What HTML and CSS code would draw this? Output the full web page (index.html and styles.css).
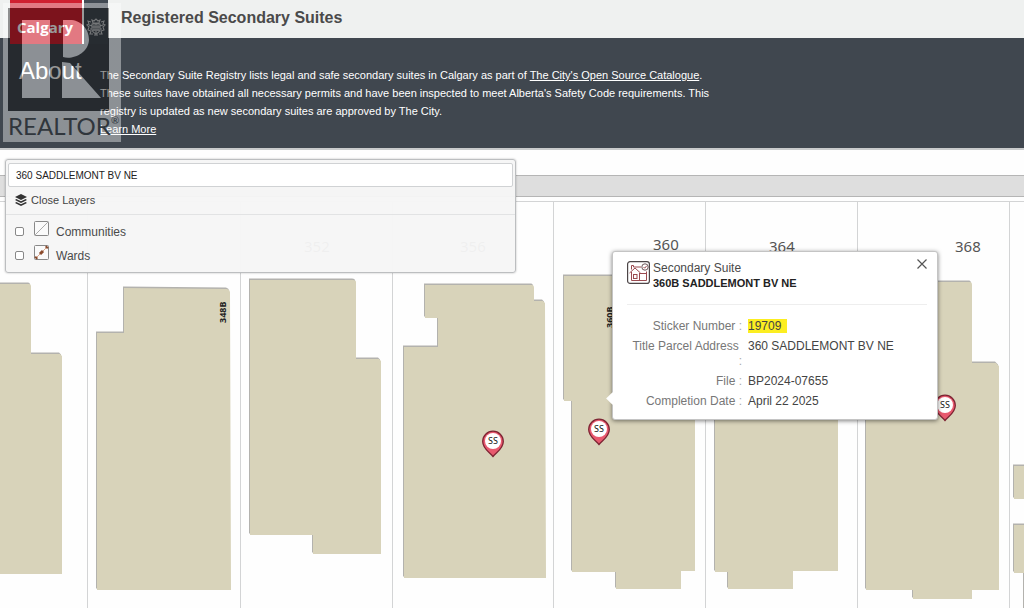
FILE: index.html
```html
<!DOCTYPE html>
<html lang="en">
<head>
<meta charset="utf-8">
<title>Registered Secondary Suites</title>
<link rel="stylesheet" href="styles.css">
</head>
<body>
<header class="topbar">
  <a class="logo" href="#" aria-label="Calgary home">
    <span class="logo-name">Calgary</span>
    <span class="logo-crest">
      <svg width="20" height="20" viewBox="0 0 20 20" fill="none" stroke="#c3c6c9" stroke-width="1.1">
        <path d="M6 3l2 1 2-2 2 2 2-1-1 3H7zM6 7h8v5c0 3-2 4-4 5-2-1-4-2-4-5zM6 10h8M10 7v9M5 5L2 4l1 3-2 1 2 2-1 3 3 1-1 3h3M15 5l3-1-1 3 2 1-2 2 1 3-3 1 1 3h-3M8 18h4M3 8l3 1M17 8l-3 1M4 12l2 0M16 12h-2M7 13h6M8 8v6M12 8v6"/>
      </svg>
    </span>
  </a>
  <h1 class="title">Registered Secondary Suites</h1>
</header>

<section class="about">
  <h2 class="about-heading">About</h2>
  <p class="about-text">The Secondary Suite Registry lists legal and safe secondary suites in Calgary as part of <a href="#">The City's Open Source Catalogue</a>. These suites have obtained all necessary permits and have been inspected to meet Alberta's Safety Code requirements. This registry is updated as new secondary suites are approved by The City.<br><a href="#">Learn More</a></p>
</section>

<main class="map">
  <svg class="map-canvas" width="100%" height="100%" aria-label="Parcel map">
    <defs>
      <g id="pin">
        <path d="M0 13.500C-3 9.500-10.300 6-10.300-1.500A10.300 10.300 0 0 1 10.300-1.500C10.300 6 3 9.500 0 13.500z" fill="#e8596e" stroke="#7d2433" stroke-width="1.300"/>
        <circle cy="-2" r="8" fill="#fff"/>
        <text class="pin-text" y="1" text-anchor="middle">SS</text>
      </g>
    </defs>
    <rect class="road" x="-2" y="25.500" width="110%" height="21"/>
    <g transform="translate(0 -150)">
      <path class="lot" d="M0 201.500H2000M87.500 201V700M240.500 201V700M392.500 201V700M553.500 201V700M705.500 201V700M857.500 201V700M1009.500 201V700"/>
      <g class="shade" transform="translate(-1 -1.500)">
        <path id="houses" d="M-5 284H29Q31 284 31 286V354H60L62 356V574H-5zM97 333H124V288L227 289Q230 290 230 292L231 590H97zM250 280H353Q356 280 356 282V359H379L381 361V554H313V535H250zM425 285H532Q534 285 534 288V301H543L545 303L546 578H404V347H438V318H425zM564 276H720V400H695V571H681V589H616V572H572V401H564zM715 400H838V571H793V589H728V572H715zM866 400V282H970Q972 282 972 285V363H996L999 366V590H972V599H913V590H866zM1014 466H1300V499H1014zM1014 525H1300V700H1024V573H1014z"/>
      </g>
      <use href="#houses" class="house"/>
      <g class="number">
        <text x="653" y="250">360</text>
        <text x="769" y="252">364</text>
        <text x="955" y="252">368</text>
        <text class="faint" x="304" y="252">352</text>
        <text class="faint" x="460" y="252">356</text>
      </g>
      <g class="unit">
        <text transform="translate(226 323) rotate(-90)">348B</text>
        <text transform="translate(613 328) rotate(-90)">360B</text>
      </g>
      <use href="#pin" x="493" y="443"/>
      <use href="#pin" x="599" y="431"/>
      <use href="#pin" x="945" y="407"/>
    </g>
  </svg>

  <form class="panel">
    <input class="search" type="text" value="360 SADDLEMONT BV NE" aria-label="Search address">
    <button class="layers-toggle" type="button">
      <svg width="12" height="12" viewBox="0 0 12 12" fill="#333"><path d="M6 0l6 3-6 3-6-3z"/><path d="M1.300 5L6 7.300 10.700 5 12 6 6 9 0 6z"/><path d="M1.300 8L6 10.200 10.700 8 12 9 6 12 0 9z"/></svg>
      Close Layers
    </button>
    <div class="layers">
      <label class="layer">
        <input type="checkbox">
        <svg width="15" height="15" viewBox="0 0 15 15" fill="#fafafa" stroke="#888"><rect x=".5" y=".5" width="14" height="14" rx="1"/><path d="M1 14L14 1" stroke="#aaa"/></svg>
        <span>Communities</span>
      </label>
      <label class="layer">
        <input type="checkbox">
        <svg width="15" height="15" viewBox="0 0 15 15" fill="#fafafa" stroke="#888"><rect x=".5" y=".5" width="14" height="14" rx="1"/><path d="M2 13L13 2" stroke="#d9a58a"/><path d="M1.500 13.500l1.500-1.500M6 9L9 6M12 3l1.500-1.500" stroke="#8a4a2c" stroke-width="3"/></svg>
        <span>Wards</span>
      </label>
    </div>
  </form>

  <article class="popup">
    <header class="popup-head">
      <svg class="popup-icon" width="23" height="23" viewBox="0 0 23 23" fill="none" stroke="#9a4a50" stroke-width="1">
        <rect x=".6" y=".6" width="21.800" height="21.800" rx="2.500" stroke="#4c4547" stroke-width="1.200"/>
        <path d="M4.500 11v8.500h15V10.500M2.500 12L8 7l5.500 5M4.500 8.500V4.500h2V6H14M12.500 12v7.500M12.500 12.500h7"/>
        <rect x="6.500" y="13.500" width="3.500" height="4"/>
        <circle cx="18" cy="6" r="3.200" stroke="#6b5558"/><path d="M16.500 6l1.200 1.200 2-2.400"/>
      </svg>
      <div class="popup-title">
        <span>Secondary Suite</span>
        <strong>360B SADDLEMONT BV NE</strong>
      </div>
      <button class="close" type="button" aria-label="Close">
        <svg width="10" height="10" viewBox="0 0 10 10" fill="none" stroke="#555" stroke-width="1.200"><path d="M.5.5l9 9M9.500.5l-9 9"/></svg>
      </button>
    </header>
    <dl class="facts">
      <dt>Sticker Number <i>:</i></dt><dd><mark>19709</mark></dd>
      <dt>Title Parcel Address&nbsp; <i>:</i></dt><dd>360 SADDLEMONT BV NE</dd>
      <dt>File <i>:</i></dt><dd>BP2024-07655</dd>
      <dt>Completion Date <i>:</i></dt><dd>April 22 2025</dd>
    </dl>
  </article>
</main>

<div class="watermark">
  <svg class="watermark-r" viewBox="0 0 101 103" width="101" height="103" aria-hidden="true">
    <path class="wm-dark" fill-rule="evenodd" d="M0 0H101V103H0zM14 12V90H42V12zM55 12V49C64 52 80 46 81 32C81 20 72 12 62 12zM54 54V90H93L62 55z"/>
    <path class="wm-light" d="M14 12H42V90H14zM55 12H62C72 12 81 20 81 32C80 46 64 52 55 49zM54 54L62 55 93 90H54z"/>
  </svg>
  <span class="watermark-name">REALTOR<sup>®</sup></span>
</div>
</body>
</html>
```
FILE: styles.css
```css
* { box-sizing: border-box; }
body {
  margin: 0;
  min-height: 100vh;
  display: flex;
  flex-direction: column;
  position: relative;
  overflow-x: hidden;
  font: 12px/15px "Liberation Sans", Arial, sans-serif;
  color: #4a4a4a;
}
.topbar {
  display: flex;
  gap: 13px;
  height: 38px;
  padding-left: 10px;
  background: #eff1f0;
}
.logo {
  display: flex;
  z-index: 1;
  height: 44px;
  color: #fff;
  text-decoration: none;
}
.logo-name {
  width: 74px;
  padding: 18px 7px 0;
  background: #cf2030;
  border-right: 2px solid #fff;
  font: bold 15px/18px "Open Sans", sans-serif;
}
.logo-crest {
  width: 24px;
  padding: 17px 2px 0;
  background: #424a53;
}
.title {
  margin: 0;
  font-size: 16px;
  line-height: 36px;
}
.about {
  display: flex;
  gap: 16px;
  padding: 22px 0 10px 19px;
  background: #40474f;
  border-bottom: 2px solid #c9cbcc;
  color: #fff;
}
.about-heading {
  flex: none;
  width: 65px;
  margin: 0;
  font-size: 24px;
  font-weight: normal;
  line-height: 22px;
}
.about-text {
  max-width: 616px;
  margin: 6px 0 0;
  font-size: 11px;
  line-height: 18px;
}
.about a { color: inherit; }
.map {
  flex: 1;
  position: relative;
  overflow: hidden;
  background: #fefefe;
}
.map-canvas { position: absolute; inset: 0; }
.road { fill: #dedede; stroke: #b5b5b5; }
.lot { fill: none; stroke: #d3d4d5; }
.house { fill: #d8d3ba; }
.shade { fill: #b3b2ae; }
.number { font: 15px "Noto Sans", sans-serif; fill: #555; }
.unit { font: bold 9px "Noto Sans", sans-serif; fill: #222; }
.pin-text { font: 9px "Noto Sans", sans-serif; fill: #111; }
.panel {
  position: relative;
  width: 511px;
  max-width: calc(100% - 10px);
  margin: 9px 0 0 5px;
  padding: 3px 0 4px;
  background: rgba(246, 246, 246, .96);
  border: 1px solid #bcbec0;
  border-radius: 3px;
  box-shadow: 0 0 2px rgba(0, 0, 0, .3);
}
.search {
  display: block;
  width: calc(100% - 4px);
  height: 24px;
  margin: 0 2px;
  padding: 0 7px;
  border: 1px solid #d0d2d4;
  border-radius: 2px;
  background: #fff;
  color: #222;
  font: 10px "Liberation Sans", Arial, sans-serif;
}
.layers-toggle {
  display: flex;
  align-items: center;
  gap: 4px;
  width: 100%;
  height: 28px;
  padding: 0 9px 2px;
  border: 0;
  border-bottom: 1px solid #e2e3e4;
  background: none;
  color: #444;
  font: 11px "Liberation Sans", Arial, sans-serif;
}
.layers { padding: 5px 9px 0; }
.layer {
  display: flex;
  align-items: flex-start;
  height: 24px;
  padding-top: 1px;
}
.layer input {
  appearance: none;
  width: 9px;
  height: 9px;
  margin: 6px 10px 0 0;
  border: 1px solid #888;
  border-radius: 2px;
  background: #fff;
}
.layer span { margin: 4px 0 0 7px; }
.popup {
  position: absolute;
  left: 612px;
  top: 101px;
  width: 326px;
  padding: 7px 10px 10px 14px;
  background: #fff;
  border: 1px solid #c4c4c4;
  border-radius: 3px;
  box-shadow: 0 1px 4px rgba(0, 0, 0, .5);
}
.popup::before {
  content: "";
  position: absolute;
  left: -5px;
  top: 142px;
  width: 9px;
  height: 9px;
  background: #fff;
  transform: rotate(45deg);
}
.popup-head {
  display: flex;
  gap: 3px;
  align-items: flex-start;
  height: 46px;
  border-bottom: 1px solid #eee;
}
.popup-icon { margin-top: 2px; }
.popup-title {
  flex: 1;
  display: flex;
  flex-direction: column;
  margin-top: 2px;
}
.popup-title strong { font-size: 11px; line-height: 14px; color: #222; }
.close {
  display: flex;
  padding: 0;
  border: 0;
  background: none;
}
.facts {
  display: grid;
  grid-template-columns: 115px 1fr;
  gap: 5px 6px;
  margin: 14px 0 0;
}
.facts dt { text-align: right; color: #777; }
.facts i { font-style: normal; color: #aaa; }
.facts dd { margin: 0; color: #444; }
mark { padding-right: 6px; background: #fcee21; color: inherit; }
.watermark {
  position: absolute;
  left: 3px;
  top: 3px;
  z-index: 2;
  display: flex;
  flex-direction: column;
  width: 118px;
  height: 139px;
  padding: 5px 0 0 5px;
  background: linear-gradient(rgba(255, 255, 255, .4), rgba(255, 255, 255, .4)) top / 100% 5px no-repeat,
    linear-gradient(rgba(255, 255, 255, .4), rgba(255, 255, 255, .4)) 0 5px / 5px 103px no-repeat,
    linear-gradient(rgba(255, 255, 255, .4), rgba(255, 255, 255, .4)) 106px 5px / 12px 103px no-repeat,
    linear-gradient(rgba(255, 255, 255, .4), rgba(255, 255, 255, .4)) 0 108px / 100% 31px no-repeat;
  pointer-events: none;
}
.watermark-r { flex: none; }
.wm-dark { fill: #000; fill-opacity: .4; }
.wm-light { fill: #fff; fill-opacity: .4; }
.watermark-name {
  display: flex;
  color: #30363c;
  font: 24px/30px Lato, sans-serif;
}
.watermark-name sup { font-size: 10px; line-height: 18px; }
```
